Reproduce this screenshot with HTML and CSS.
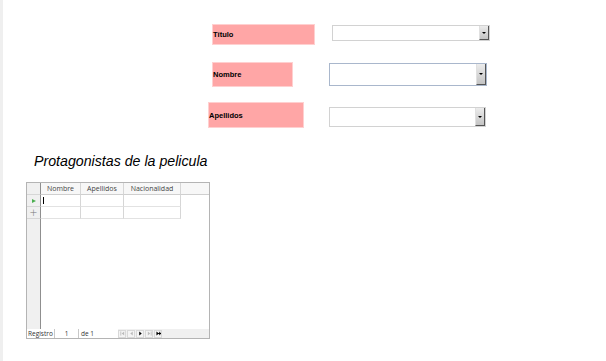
FILE: index.html
```html
<!DOCTYPE html>
<html lang="es">
<head>
  <meta charset="UTF-8" />
  <title>Películas - Formulario</title>
  <link rel="stylesheet" href="styles.css">
</head>
<body>
  <div class="page">
    <div class="form-row row-titulo">
      <label class="field-label">Título</label>
      <div class="combo"><span class="combo-btn"></span></div>
    </div>
    <div class="form-row row-nombre">
      <label class="field-label">Nombre</label>
      <div class="combo focused"><span class="combo-btn"></span></div>
    </div>
    <div class="form-row row-apellidos">
      <label class="field-label">Apellidos</label>
      <div class="combo"><span class="combo-btn"></span></div>
    </div>

    <h2 class="sub-title">Protagonistas de la pelicula</h2>

    <div class="table-control">
      <div class="grid">
        <div class="cell sel head"></div>
        <div class="cell head">Nombre</div>
        <div class="cell head">Apellidos</div>
        <div class="cell head">Nacionalidad</div>
        <div class="cell head rest"></div>

        <div class="cell sel"><span class="current"></span></div>
        <div class="cell"><span class="caret"></span></div>
        <div class="cell"></div>
        <div class="cell"></div>
        <div class="cell empty"></div>

        <div class="cell sel"><span class="new-row">+</span></div>
        <div class="cell"></div>
        <div class="cell"></div>
        <div class="cell"></div>
        <div class="cell empty"></div>

        <div class="cell sel filler"></div>
        <div class="cell empty span4"></div>
      </div>
      <div class="nav-bar">
        <span class="nav-box nav-label">Registro</span>
        <span class="nav-box nav-num">1</span>
        <span class="nav-of">de 1</span>
        <span class="nav-buttons">
          <span class="nav-btn off"><svg width="6" height="6" viewBox="0 0 6 6"><rect x="0.5" y="0.5" width="1" height="5" fill="#bbb"/><path d="M5 0.5 L2 3 L5 5.5Z" fill="#bbb"/></svg></span>
          <span class="nav-btn off"><svg width="6" height="6" viewBox="0 0 6 6"><path d="M4.5 0.5 L1.5 3 L4.5 5.5Z" fill="#bbb"/></svg></span>
          <span class="nav-btn"><svg width="6" height="6" viewBox="0 0 6 6"><path d="M1.5 0.5 L4.5 3 L1.5 5.5Z" fill="#000"/></svg></span>
          <span class="nav-btn off"><svg width="6" height="6" viewBox="0 0 6 6"><path d="M1 0.5 L4 3 L1 5.5Z" fill="#bbb"/><rect x="4.5" y="0.5" width="1" height="5" fill="#bbb"/></svg></span>
          <span class="nav-btn"><svg width="6" height="6" viewBox="0 0 6 6"><path d="M0.5 0.5 L3.5 3 L0.5 5.5Z" fill="#000"/><path d="M4.5 1 V5 M2.5 3 H6" stroke="#000" stroke-width="1.2"/></svg></span>
        </span>
      </div>
    </div>
  </div>
</body>
</html>
```

FILE: styles.css
```css
body {
  margin: 0;
  padding: 0;
  background: #fff;
  font-family: "Liberation Sans", Arial, sans-serif;
}
.page {
  border-left: 3px solid #efefef;
  min-height: 361px;
  box-sizing: border-box;
  padding-top: 25px;
}
.form-row {
  display: flex;
  align-items: flex-start;
}
.field-label {
  display: flex;
  align-items: center;
  background: #ffa6a6;
  box-shadow: 0 0 0 1px #ffd0d0;
  font-size: 7.5px;
  font-weight: bold;
  color: #000;
}
.combo {
  position: relative;
  box-sizing: border-box;
  background: #fff;
  border: 1px solid #d2d2d2;
}
.combo.focused {
  border-color: #a9b7cc;
}
.combo-btn {
  position: absolute;
  top: 0;
  right: 0;
  bottom: 0;
  width: 10px;
  box-sizing: border-box;
  background: linear-gradient(#ececec, #c4c4c4);
  border-left: 1px solid #e0e0e0;
  border-right: 1px solid #555;
  border-bottom: 1px solid #555;
}
.combo-btn::after {
  content: "";
  position: absolute;
  left: 2px;
  top: 50%;
  margin-top: -1px;
  border-left: 2px solid transparent;
  border-right: 2px solid transparent;
  border-top: 2px solid #000;
}

.row-titulo .field-label { margin-left: 210px; width: 101px; height: 19px; }
.row-titulo .combo { margin-left: 18px; width: 158px; height: 16px; }

.row-nombre { margin-top: 19px; }
.row-nombre .field-label { margin-left: 210px; width: 79px; height: 23px; }
.row-nombre .combo { margin-left: 37px; width: 158px; height: 23px; }

.row-apellidos { margin-top: 17px; }
.row-apellidos .field-label { margin-left: 206px; width: 94px; height: 24px; }
.row-apellidos .combo { margin-left: 26px; margin-top: 4px; width: 157px; height: 20px; }

.sub-title {
  margin: 25px 0 0 31px;
  font-size: 14.2px;
  line-height: 18px;
  font-style: italic;
  font-weight: normal;
  color: #000;
}

.table-control {
  margin: 12px 0 0 23px;
  width: 184px;
  height: 157px;
  box-sizing: border-box;
  border: 1px solid #b4b4b4;
  display: flex;
  flex-direction: column;
  font-family: "Open Sans", "Noto Sans", sans-serif;
  font-size: 7px;
  color: #444;
}
.grid {
  flex: 1;
  display: grid;
  grid-template-columns: 14px 40px 43px 57px 1fr;
  grid-template-rows: 12px 12px 12px 1fr;
}
.cell {
  box-sizing: border-box;
  border-right: 1px solid #d6d6d6;
  border-bottom: 1px solid #e2e2e2;
  display: flex;
  align-items: center;
  justify-content: center;
  position: relative;
}
.cell.head {
  background: #f7f7f7;
  border-bottom-color: #cfcfcf;
}
.cell.head.rest {
  border-right: none;
}
.cell.sel {
  background: #f0f0f0;
  border-right-color: #8f8f8f;
  border-bottom-color: #d6d6d6;
}
.cell.sel.filler {
  border-bottom: none;
}
.cell.empty {
  border: none;
}
.cell.span4 {
  grid-column: span 4;
}
.current {
  border-top: 2.5px solid transparent;
  border-bottom: 2.5px solid transparent;
  border-left: 4px solid #4caf50;
}
.caret {
  position: absolute;
  left: 2px;
  top: 2px;
  bottom: 2px;
  width: 1px;
  background: #000;
}
.new-row {
  font-family: "DejaVu Sans", sans-serif;
  font-size: 10px;
  font-weight: 200;
  color: #777;
  line-height: 1;
}
.nav-bar {
  height: 9px;
  background: #f0f0f0;
  display: flex;
  align-items: stretch;
  font-size: 6.5px;
  color: #333;
  line-height: 9px;
}
.nav-box {
  box-sizing: border-box;
  border-right: 1px solid #c8c8c8;
}
.nav-label {
  width: 28px;
  background: #fff;
  padding-left: 1px;
  white-space: nowrap;
  overflow: hidden;
}
.nav-num {
  width: 24px;
  background: #fff;
  text-align: center;
}
.nav-of {
  width: 37px;
  background: #fff;
  padding-left: 2px;
}
.nav-buttons {
  display: flex;
  gap: 1px;
  align-items: center;
}
.nav-btn {
  width: 8px;
  height: 8px;
  box-sizing: border-box;
  border: 1px solid #d8d8d8;
  background: #f4f4f4;
  display: flex;
  align-items: center;
  justify-content: center;
}
.nav-btn svg {
  width: 5px;
  height: 5px;
}
```
